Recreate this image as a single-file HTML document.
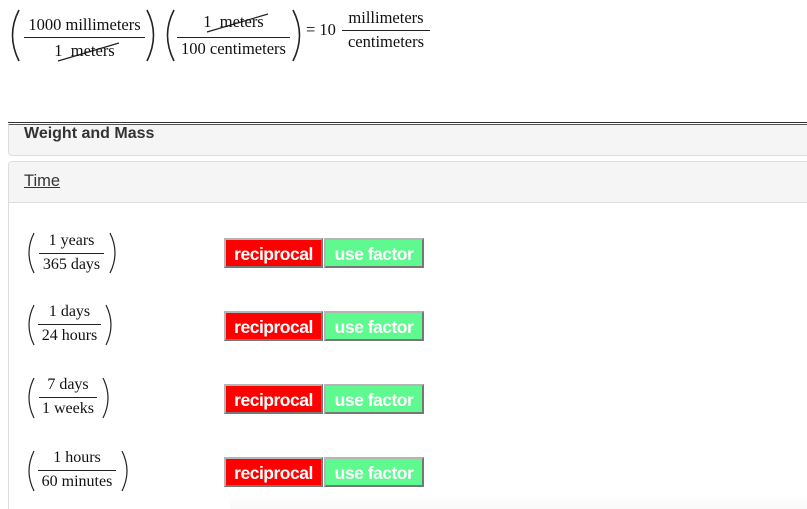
<!DOCTYPE html>
<html style="overflow:hidden;height:509px"><head><meta charset="utf-8"><style>
body{margin:0;width:807px;height:509px;background:#fff;position:relative;overflow:hidden;font-family:"Liberation Serif",serif;color:#111}
.t{position:absolute;font-size:16.5px;white-space:nowrap;line-height:16px}
.s{font-size:16px}
.c{text-align:center}
.ln{position:absolute;height:1px;background:#222}
svg{position:absolute}
.btn{position:absolute;height:26px;border:2px solid;border-color:#b5b5b5 #777 #777 #b5b5b5;font:bold 17.5px "Liberation Sans",sans-serif;color:#fff;line-height:28px;text-align:center;letter-spacing:-0.5px}
.r{background:#f00;width:95px}.g{background:#5ef98f;width:96px}
</style></head><body>
<svg width="807" height="70" style="left:0;top:0">
<g fill="none" stroke="#222" stroke-width="1.6">
<path d="M19 10 Q6 35 19 61"/><path d="M147 10 Q160 35 147 61"/>
<path d="M174 10 Q161 35 174 61"/><path d="M293 10 Q306 35 293 61"/>
</g>
<g stroke="#222" stroke-width="1.2"><line x1="58" y1="61" x2="119" y2="43"/><line x1="207" y1="32" x2="268" y2="14"/></g>
</svg>
<div class="ln" style="left:24px;top:37px;width:121px"></div>
<div class="t c" style="left:24px;top:17px;width:121px">1000 millimeters</div>
<div class="t c" style="left:24px;top:43px;width:121px">1 &nbsp;meters</div>
<div class="ln" style="left:177px;top:37px;width:113px"></div>
<div class="t c" style="left:177px;top:14px;width:113px">1 &nbsp;meters</div>
<div class="t c" style="left:177px;top:41px;width:113px">100 centimeters</div>
<div class="t" style="left:306px;top:22px">= 10</div>
<div class="ln" style="left:342px;top:30px;width:88px"></div>
<div class="t c" style="left:342px;top:10px;width:88px">millimeters</div>
<div class="t c" style="left:342px;top:34px;width:88px">centimeters</div>
<div style="position:absolute;left:8px;top:122px;width:820px;height:1px;background:#333"></div>
<div style="position:absolute;left:8px;top:124px;width:820px;height:30px;background:#f5f5f5;border-top:1px solid #555;border-left:1px solid #ddd;border-bottom:1px solid #ddd;border-radius:0 0 0 4px"></div>
<div style="position:absolute;left:24px;top:125px;font:bold 16px 'Liberation Sans',sans-serif;color:#333">Weight and Mass</div>
<div style="position:absolute;left:8px;top:161px;width:820px;height:360px;border:1px solid #ddd;border-radius:4px;background:#fff"></div>
<div style="position:absolute;left:9px;top:162px;width:820px;height:40px;background:#f5f5f5;border-bottom:1px solid #ddd;border-radius:4px 0 0 0"></div>
<div style="position:absolute;left:24px;top:172px;font:16.5px 'Liberation Sans',sans-serif;color:#333;text-decoration:underline">Time</div>
<div style="position:absolute;left:230px;top:495px;width:600px;height:20px;background:linear-gradient(#fff,#f6f6f6)"></div>
<svg width="140" height="300" style="left:0;top:220px">
<g fill="none" stroke="#222" stroke-width="1.2">
<path d="M34 13 Q24 33 34 53"/><path d="M110 13 Q120 33 110 53"/>
<path d="M34 85 Q24 105 34 125"/><path d="M106 85 Q116 105 106 125"/>
<path d="M34 158 Q24 178 34 198"/><path d="M103 158 Q113 178 103 198"/>
<path d="M34 231 Q24 251 34 271"/><path d="M122 231 Q132 251 122 271"/>
</g></svg>
<div class="ln" style="left:39px;top:253px;width:65px"></div>
<div class="t s c" style="left:39px;top:233px;width:65px">1 years</div>
<div class="t s c" style="left:39px;top:257px;width:65px">365 days</div>
<div class="ln" style="left:38px;top:324px;width:63px"></div>
<div class="t s c" style="left:38px;top:304px;width:63px">1 days</div>
<div class="t s c" style="left:38px;top:328px;width:63px">24 hours</div>
<div class="ln" style="left:39px;top:397px;width:58px"></div>
<div class="t s c" style="left:39px;top:377px;width:58px">7 days</div>
<div class="t s c" style="left:39px;top:401px;width:58px">1 weeks</div>
<div class="ln" style="left:38px;top:470px;width:78px"></div>
<div class="t s c" style="left:38px;top:450px;width:78px">1 hours</div>
<div class="t s c" style="left:38px;top:474px;width:78px">60 minutes</div>
<div class="btn r" style="left:224px;top:238px">reciprocal</div><div class="btn g" style="left:324px;top:238px">use factor</div>
<div class="btn r" style="left:224px;top:311px">reciprocal</div><div class="btn g" style="left:324px;top:311px">use factor</div>
<div class="btn r" style="left:224px;top:384px">reciprocal</div><div class="btn g" style="left:324px;top:384px">use factor</div>
<div class="btn r" style="left:224px;top:457px">reciprocal</div><div class="btn g" style="left:324px;top:457px">use factor</div>
</body></html>
